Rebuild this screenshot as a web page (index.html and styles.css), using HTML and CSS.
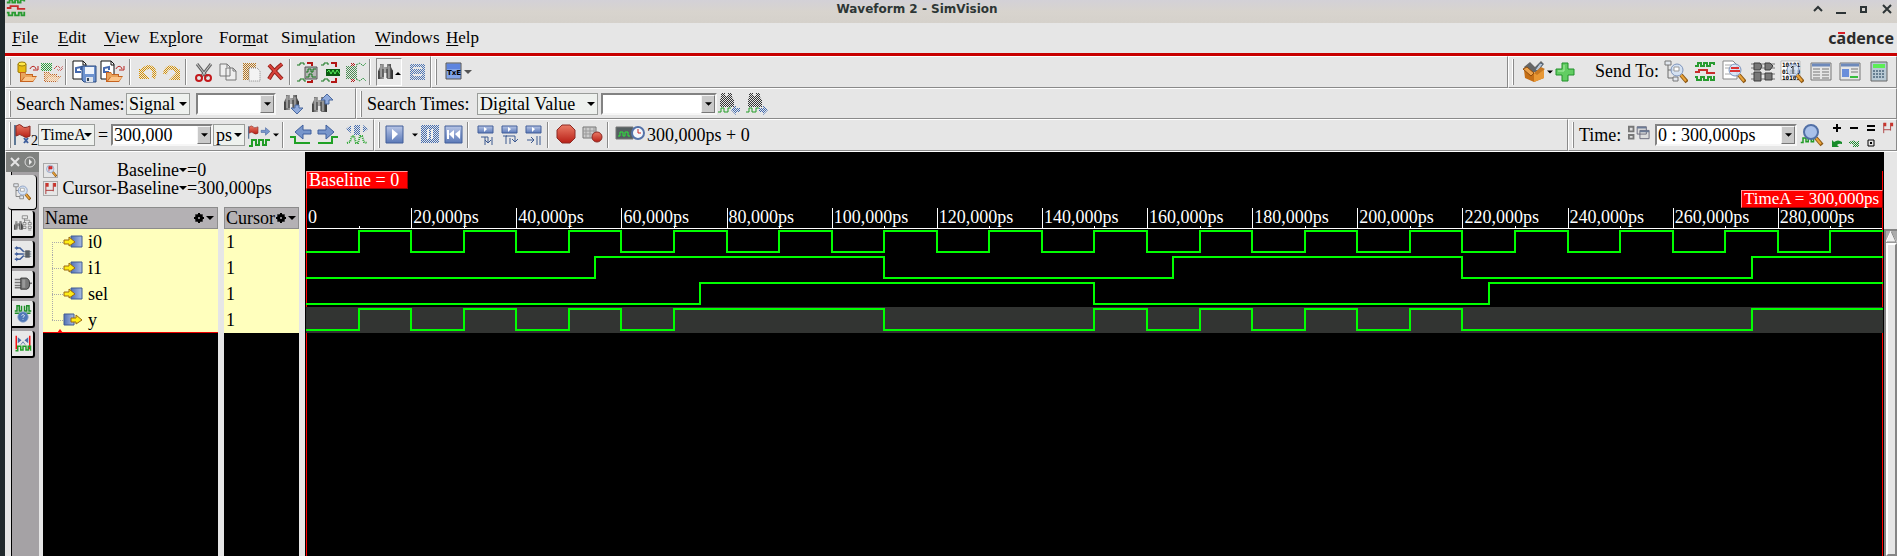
FILE: index.html
```html
<!DOCTYPE html>
<html lang="en">
<head>
<meta charset="utf-8">
<title>Waveform 2 - SimVision</title>
<link rel="stylesheet" href="styles.css">
</head>
<body>
<svg class="defs" aria-hidden="true">
  <defs>
    <pattern id="dots" width="2" height="2" patternUnits="userSpaceOnUse"><path fill="#fff" d="M0 0h1v1H0zM1 1h1v1H1z" shape-rendering="crispEdges"/></pattern>
    <mask id="dither" maskUnits="userSpaceOnUse" x="0" y="0" width="30" height="30"><rect width="30" height="30" fill="url(#dots)"/></mask>
    <linearGradient id="blue" x2="0" y2="1"><stop stop-color="#b8c6e6"/><stop offset="1" stop-color="#5b79b8"/></linearGradient>
    <linearGradient id="port"><stop stop-color="#5272b4"/><stop offset="1" stop-color="#a9bce2"/></linearGradient>
    <linearGradient id="red" x2="0" y2="1"><stop stop-color="#ea7b66"/><stop offset="1" stop-color="#b81f16"/></linearGradient>
    <linearGradient id="metal"><stop stop-color="#555"/><stop offset=".45" stop-color="#aaa"/><stop offset="1" stop-color="#333"/></linearGradient>
  </defs>
  <symbol id="folder" viewBox="0 0 24 24"><path d="M4 12h5l1 2h7v2h4l-4 6H4z" fill="#c56320"/><path d="M5 13h4l1 2h6v2H8l-3 4z" fill="#e9a45c"/><path d="M9 17h11l-3 4H6z" fill="#fbc58a"/><path d="M14 9c1-3 5-4 6 0m2-3v4h-5" fill="none" stroke="#b7201d"/></symbol>
  <symbol id="doc" viewBox="0 0 24 24"><path d="M1 1h10l3 3v15H1z" fill="#fff" stroke="#111"/><path d="M11 1v4h3" fill="none" stroke="#111"/><path d="M4 12V8l5-1v3M3 12h6" fill="none" stroke="#4468ad" stroke-width="2"/></symbol>
  <symbol id="binoc" viewBox="0 0 24 24"><path d="M5 3h4v3h3V3h4v3l2 4v8h-6v-6H9v6H3v-8l2-4z" fill="url(#metal)"/><path d="M6 4v12M14 5v12" stroke="#bbb"/><path d="M4 10v8M8 8v8M12 8v9M17 9v8" stroke="#333"/></symbol>
  <symbol id="waves" viewBox="0 0 24 24"><path d="M2 6h3V3h3v3h3V3h3v3h3V3h4v2" fill="none" stroke="#289b30" stroke-width="2"/><path d="M2 12h4v-2h8v3h8" fill="none" stroke="#c82c2c" stroke-width="2"/><path d="M2 17h2v3h4v-3h3v3h4v-3h3v3h3v-4" fill="none" stroke="#289b30" stroke-width="2"/></symbol>
  <symbol id="mag" viewBox="0 0 24 24"><path d="M17 15l6 7" stroke="#8c5713" stroke-width="4"/><path d="M17 15l5 6" stroke="#eaa43b" stroke-width="2"/><circle cx="13" cy="10" r="6" fill="#cfe0f5" fill-opacity=".8" stroke="#7d93bb" stroke-width="1"/></symbol>
  <symbol id="flag" viewBox="0 0 24 24"><path d="M1 2v20" stroke="#5d7896" stroke-width="2"/><path d="M2 3q4-3 6 0t8 0v10q-4 3-7 0t-7 0z" fill="url(#red)" stroke="#8c2a24"/></symbol>
  <symbol id="tree" viewBox="0 0 24 24"><path d="M4 5v13h6M4 10h6" fill="none" stroke="#6c6c6c"/><path d="M1 1h6v4H1zM9 17h5v4H9z" fill="#e3e8ef" stroke="#777"/></symbol>
  <symbol id="wavelet" viewBox="0 0 24 24"><path d="M1 22h3v-6h4v5h3v-5h4v5h3v-5h4" fill="none" stroke="#229c27" stroke-width="2"/></symbol>
  <symbol id="arrowR" viewBox="0 0 24 24"><path d="M4 8h8V3l8 7-8 7v-5H4z" fill="#7896cb" stroke="#3f5f9d"/></symbol>
  <symbol id="play" viewBox="0 0 24 24"><path d="M3 3h17v17H3z" fill="url(#blue)" stroke="#435f99"/></symbol>
  <symbol id="caret" viewBox="0 0 8 6"><path d="M0 1h8L4 5z"/></symbol>
  <symbol id="gear" viewBox="0 0 12 12"><path d="M5 1h2v10H5zM1 5h10v2H1zM2 3l1-1 7 7-1 1zM9 2l1 1-7 7-1-1z"/><circle cx="6" cy="6" r="4"/><circle cx="6" cy="6" r="1" fill="#b4b1b4"/></symbol>
  <symbol id="cursors" viewBox="0 0 14 14"><path d="M2 1v12M10 1v9M2 9h8" fill="none" stroke="#a33"/><path d="M2 1h3v4H2zM10 1h3v4h-3z" fill="#c9352c"/></symbol>
  <symbol id="portIn" viewBox="0 0 20 14"><path d="M8 1h11v11H8z" fill="url(#port)" stroke="#405a94"/><path d="M1 5h5V2l6 5-6 4V9H1z" fill="#ffed16" stroke="#9b6813"/></symbol>
  <symbol id="portOut" viewBox="0 0 20 14"><path d="M1 1h10v11H1z" fill="url(#port)" stroke="#405a94"/><path d="M8 5h5V2l6 5-6 4V9H8z" fill="#ffed16" stroke="#9b6813"/></symbol>
</svg>

<div class="window">
  <header class="titlebar">
    <svg class="app-icon" viewBox="0 0 24 24"><use href="#waves"/></svg>
    <h1 class="title">Waveform 2 - SimVision</h1>
    <div class="win-controls">
      <button aria-label="Shade"><svg viewBox="0 0 12 12"><path d="M2 8l4-4 4 4" fill="none" stroke="#2d3436" stroke-width="2"/></svg></button>
      <button aria-label="Minimize"><svg viewBox="0 0 12 12"><path d="M1 10h10" stroke="#2d3436" stroke-width="2"/></svg></button>
      <button aria-label="Maximize"><svg viewBox="0 0 12 12"><path d="M3 4h5v5H3z" fill="none" stroke="#2d3436" stroke-width="2"/></svg></button>
      <button aria-label="Close"><svg viewBox="0 0 12 12"><path d="M2 2l8 8M10 2l-8 8" stroke="#2d3436" stroke-width="2"/></svg></button>
    </div>
  </header>

  <nav class="menubar">
    <button><u>F</u>ile</button><button><u>E</u>dit</button><button><u>V</u>iew</button><button>Ex<u>p</u>lore</button><button>For<u>m</u>at</button><button>Sim<u>u</u>lation</button><button><u>W</u>indows</button><button><u>H</u>elp</button>
    <span class="brand">c<span class="macron">a</span>dence</span>
  </nav>

  <div class="toolrow">
    <div class="bar">
      <span class="grip"></span>
      <button class="tool" aria-label="Open database"><svg viewBox="0 0 24 24"><path d="M2 4h8v8q-4 3-8 0z" fill="#e8bd10" stroke="#a07a08"/><ellipse cx="6" cy="4" rx="4" ry="2" fill="#ffe84a" stroke="#9a7b07"/><use href="#folder"/></svg></button>
      <button class="tool" aria-label="Reload" disabled><svg viewBox="0 0 24 24"><g mask="url(#dither)"><use href="#folder"/><path d="M1 3h11v8H1z" fill="#2b9e3d"/></g></svg></button>
      <span class="sep"></span>
      <button class="tool wide" aria-label="Save"><svg viewBox="0 0 28 24"><use href="#doc" width="24" height="24"/><path d="M10 6h14v16H12l-2-2z" fill="#6e93cf" stroke="#2b4a80"/><path d="M13 7h9v7h-9z" fill="#eef3fb"/><path d="M14 17h7v5h-7z" fill="#dde3ec"/><path d="M15 18h2v3h-2z" fill="#345"/></svg></button>
      <button class="tool wide" aria-label="Open file"><svg viewBox="0 0 28 24"><use href="#doc" width="24" height="24"/><use href="#folder" x="2" width="24" height="24"/></svg></button>
      <span class="sep"></span>
      <button class="tool" aria-label="Undo" disabled><svg viewBox="0 0 24 24"><path d="M5 12q7-8 12-3 3 4 0 9" fill="none" stroke="#d79100" stroke-width="4" mask="url(#dither)"/><path d="M3 8v11h11z" fill="#d79100" mask="url(#dither)"/></svg></button>
      <button class="tool" aria-label="Redo" disabled><svg viewBox="0 0 24 24"><path d="M5 14q1-8 8-6 4 1 5 6" fill="none" stroke="#d79100" stroke-width="4" mask="url(#dither)"/><path d="M20 9v11H9z" fill="#d79100" mask="url(#dither)"/></svg></button>
      <span class="sep"></span>
      <button class="tool" aria-label="Cut"><svg viewBox="0 0 24 24"><path d="M5 4l10 13M19 4L9 17" stroke="#666" stroke-width="3"/><path d="M5 4l10 13M19 4L9 17" stroke="#ccc"/><circle cx="7" cy="18" r="3" fill="none" stroke="#c3191c" stroke-width="2"/><circle cx="16" cy="18" r="3" fill="none" stroke="#c3191c" stroke-width="2"/></svg></button>
      <button class="tool" aria-label="Copy"><svg viewBox="0 0 24 24"><path d="M4 4h7l3 3v9H4zM10 8h7l3 3v9H10z" fill="#eee" stroke="#777"/><path d="M17 8v3h3M11 4v3" fill="none" stroke="#777"/></svg></button>
      <button class="tool" aria-label="Paste" disabled><svg viewBox="0 0 24 24"><path d="M3 3h13v17H3z" fill="#b9761b" mask="url(#dither)"/><path d="M9 8h8l3 3v10H9z" fill="#f3f3f3" stroke="#888" stroke-dasharray="1 1"/></svg></button>
      <button class="tool" aria-label="Delete"><svg viewBox="0 0 24 24"><path d="M5 5l13 14M18 4Q10 10 5 19" stroke="#8e2019" stroke-width="4" fill="none"/><path d="M5 5l13 14M18 4Q10 10 5 19" stroke="#d9423a" stroke-width="2" fill="none"/></svg></button>
      <span class="sep"></span>
      <button class="tool" aria-label="Group"><svg viewBox="0 0 24 24"><path d="M9 7h12v12H9z" fill="#b5b5b5" stroke="#555"/><path d="M1 5h3V3h4v2M1 21h3v-2h4v2h2M10 12h2v-3h3v3h2v-3h3M10 17h3v-3h3v3h4" fill="none" stroke="#14771c"/><path d="M11 3h5v3M11 22h5v-2" fill="none" stroke="#b31614" stroke-width="2"/></svg></button>
      <button class="tool" aria-label="Bus"><svg viewBox="0 0 24 24"><path d="M6 9h14v7H6z" fill="#0b5b12"/><path d="M7 12l2-2 2 4 2-4 2 4 2-4 3 4" fill="none" stroke="#57f05c"/><path d="M1 5h3V3h4v2M1 21h3v-2h4v2h2" fill="none" stroke="#14771c"/><path d="M11 3h5v4M11 22h5v-4" fill="none" stroke="#b31614" stroke-width="2"/></svg></button>
      <button class="tool" aria-label="Expand" disabled><svg viewBox="0 0 24 24"><path d="M7 3h4v3H7zM7 19h4v3H7z" fill="#b31614" mask="url(#dither)"/><path d="M2 6h11v13H2z" fill="#4b8b52" mask="url(#dither)"/><path d="M12 5l4-2 3 3 3-3M12 19l4 2 3-3 3 3" fill="none" stroke="#249238" stroke-dasharray="2 1"/></svg></button>
      <span class="sep"></span>
      <button class="tool pressed" aria-label="Search"><svg viewBox="0 0 24 24"><use href="#binoc" x="-2" y="1"/><path d="M18 15h6l-3-3z"/></svg></button>
      <button class="tool big" aria-label="Grid" disabled><svg viewBox="0 0 24 24"><path d="M5 4h15v16H5z" fill="#4f77b5" mask="url(#dither)"/><path d="M8 8h9M8 15h9" stroke="#e6e6e6" stroke-width="2"/></svg></button>
    </div>
    <div class="bar grow">
      <span class="grip"></span>
      <button class="tool" aria-label="Text editor"><svg viewBox="0 0 24 24"><path d="M4 3h15v16H4z" fill="#82a4e8" stroke="#555"/><path d="M5 4h13v5H5z" fill="#5d84df"/><text x="5" y="15" class="tiny">TxE</text></svg></button>
      <svg class="caret grey" viewBox="0 0 8 6"><use href="#caret"/></svg>
    </div>
    <div class="bar send">
      <span class="grip"></span>
      <button class="tool toolbox" aria-label="Toolbox"><svg viewBox="0 0 24 24"><path d="M2 7l6-5 5 5 6-6 3 3-8 8H5z" fill="#666"/><path d="M13 10l5-7 3 1-5 7z" fill="#b9c5d5" stroke="#567"/><path d="M2 10l10 3 10-4v9l-10 4-9-4z" fill="#c56e15"/><path d="M12 13l10-4v9l-10 4z" fill="#e89835"/><path d="M1 9l4-2 7 6-3 3z" fill="#eda24a" stroke="#8d4c0d"/><path d="M12 13l7-6 4 2-8 6z" fill="#c77821"/></svg></button>
      <svg class="caret slim" viewBox="0 0 8 6"><use href="#caret"/></svg>
      <button class="tool big" aria-label="Add"><svg viewBox="0 0 24 24"><path d="M9 3h6v6h6v6h-6v6H9v-6H3V9h6z" fill="#62cd62" stroke="#21902a"/><path d="M11 5v6H5" fill="none" stroke="#a9eda5"/></svg></button>
      <span class="label send-label">Send To:</span>
      <button class="tool send-to" aria-label="Design browser"><svg viewBox="0 0 24 24"><use href="#tree"/><use href="#mag"/><path d="M10 7h5v4h-5z" fill="#fff" stroke="#999"/></svg></button>
      <button class="tool send-to" aria-label="Waveform"><svg viewBox="0 0 24 24"><use href="#waves"/></svg></button>
      <button class="tool send-to" aria-label="Source browser"><svg viewBox="0 0 24 24"><path d="M1 1h10l4 4v14H1z" fill="#fff" stroke="#888"/><path d="M3 5h7M3 8h7M3 14h8" stroke="#aaa"/><use href="#mag"/><path d="M9 8h8M8 11h10" stroke="#dc3333" stroke-width="2"/></svg></button>
      <button class="tool send-to" aria-label="Schematic"><svg viewBox="0 0 24 24"><path d="M0 4h24M0 8h24M0 14h24M0 19h24" stroke="#777"/><path d="M3 3h6l2 3-2 4H3zM14 3h5l3 3-3 4h-5zM3 12h7v9H3zM14 13h7v7h-7z" fill="#777" stroke="#3c3c3c"/></svg></button>
      <button class="tool send-to" aria-label="Memory viewer"><svg viewBox="0 0 24 24"><path d="M1 1h19v19H1z" fill="#fff" stroke="#bbb"/><text x="2" y="7" class="bits">10101</text><text x="2" y="14" class="bits">01010</text><text x="2" y="20" class="bits">10101</text><use href="#mag"/><path d="M11 8l2-2v8" fill="none" stroke="#222"/></svg></button>
      <button class="tool send-to" aria-label="Register"><svg viewBox="0 0 24 24"><path d="M2 3h20v17H2z" fill="#e6e6e6" stroke="#777"/><path d="M3 5h18" stroke="#6d89bb" stroke-width="3"/><path d="M4 9h7M13 9h7M4 12h7M13 12h7M4 15h7M13 15h7M4 18h7M13 18h7" stroke="#777"/></svg></button>
      <button class="tool send-to" aria-label="Properties"><svg viewBox="0 0 24 24"><path d="M2 3h20v17H2z" fill="#e6e6e6" stroke="#777"/><path d="M3 5h18" stroke="#6d89bb" stroke-width="3"/><path d="M4 9h7v8H4z" fill="#6a8edb"/><path d="M13 9h7M13 12h7" stroke="#777"/><path d="M12 17h8" stroke="#35bd3c" stroke-width="2"/></svg></button>
      <button class="tool send-to" aria-label="Calculator"><svg viewBox="0 0 24 24"><path d="M4 2h16v19H4z" fill="#b8c9d4" stroke="#666"/><path d="M6 4h12v4H6z" fill="#5bee54"/><path d="M6 11h12M6 14h12M6 17h12" stroke="#667f91" stroke-width="2" stroke-dasharray="2 1"/></svg></button>
    </div>
  </div>

  <div class="toolrow">
    <div class="bar names">
      <span class="grip"></span>
      <label class="label w110" for="names-kind">Search Names:</label>
      <span class="option"><select id="names-kind" class="w62"><option>Signal</option></select><svg class="caret" viewBox="0 0 8 6"><use href="#caret"/></svg></span>
      <span class="combo gap-l"><input class="w62" type="text" aria-label="Name to search"><button aria-label="Show names"><svg viewBox="0 0 8 6"><use href="#caret"/></svg></button></span>
      <button class="tool big gap-l" aria-label="Search down"><svg viewBox="0 0 24 24"><use href="#binoc" x="-1"/><path d="M13 13h4v3h4l-6 6-6-6h4z" fill="#8faadc" stroke="#4b699e"/></svg></button>
      <button class="tool big" aria-label="Search up"><svg viewBox="0 0 24 24"><use href="#binoc" x="-1" y="2"/><path d="M15 12h4V8h4l-6-6-6 6h4z" fill="#8faadc" stroke="#4b699e"/></svg></button>
    </div>
    <div class="bar grow">
      <span class="grip"></span>
      <label class="label w110" for="times-kind">Search Times:</label>
      <span class="option"><select id="times-kind" class="w118"><option>Digital Value</option></select><svg class="caret" viewBox="0 0 8 6"><use href="#caret"/></svg></span>
      <span class="combo gap-s"><input class="w98" type="text" aria-label="Value to search"><button aria-label="Show values"><svg viewBox="0 0 8 6"><use href="#caret"/></svg></button></span>
      <button class="tool big" aria-label="Search back" disabled><svg viewBox="0 0 24 24"><path d="M4 1h4v3h3V1h4v4l2 3v7H3V8l1-3z" fill="#333" mask="url(#dither)"/><path d="M1 20h3v-4h3v4h4v-4h3" fill="none" stroke="#229c27"/><path d="M14 18l5-5v3h4v4h-4v3z" fill="#426bb0" mask="url(#dither)"/></svg></button>
      <button class="tool big" aria-label="Search forward" disabled><svg viewBox="0 0 24 24"><path d="M4 1h4v3h3V1h4v4l2 3v7H3V8l1-3z" fill="#333" mask="url(#dither)"/><path d="M1 20h3v-4h3v4h4v-4h3" fill="none" stroke="#229c27"/><path d="M23 18l-5-5v3h-4v4h4v3z" fill="#426bb0" mask="url(#dither)"/></svg></button>
    </div>
  </div>

  <div class="toolrow">
    <div class="bar">
      <span class="grip slim-grip"></span>
      <button class="tool" aria-label="Cursor"><svg viewBox="0 0 24 24"><use href="#flag"/><path d="M10 15l4 5m0-5l-4 5" stroke="#3f5f9d" stroke-width="2"/><text x="17" y="22" class="sub">2</text></svg></button>
      <span class="option"><select class="w54" aria-label="Cursor name"><option>TimeA</option></select><svg class="caret" viewBox="0 0 8 6"><use href="#caret"/></svg></span>
      <span class="label equals">=</span>
      <span class="combo"><input class="w84" type="text" value="300,000" aria-label="Cursor time"><button aria-label="Show times"><svg viewBox="0 0 8 6"><use href="#caret"/></svg></button></span>
      <span class="option"><select class="w30" aria-label="Unit"><option>ps</option></select><svg class="caret" viewBox="0 0 8 6"><use href="#caret"/></svg></span>
      <button class="tool gap-s" aria-label="Go to cursor"><svg viewBox="0 0 24 24"><use href="#flag" width="15" height="15" y="2"/><use href="#arrowR" x="11" y="3" width="13" height="13"/><use href="#wavelet" y="1"/></svg></button>
      <svg class="caret slim" viewBox="0 0 8 6"><use href="#caret"/></svg>
      <span class="sep"></span>
      <button class="tool big" aria-label="Previous edge"><svg viewBox="0 0 24 24"><path d="M22 7h-8V2L6 9l8 7v-5h8z" fill="#7896cb" stroke="#3f5f9d"/><path d="M1 14h5v6h15" fill="none" stroke="#20a126" stroke-width="2"/></svg></button>
      <button class="tool big" aria-label="Next edge"><svg viewBox="0 0 24 24"><use href="#arrowR" x="-3" y="-1"/><path d="M1 20h14v-6h6" fill="none" stroke="#20a126" stroke-width="2"/></svg></button>
      <button class="tool big" aria-label="Both edges" disabled><svg viewBox="0 0 24 24"><path d="M1 6l5-4v8zM23 6l-5-4v8zM9 2h6v10H9z" fill="#426bb0" mask="url(#dither)"/><path d="M2 20l3-1 2-6h2l2 7h2l2-7h2l2 6 3 1" fill="none" stroke="#20a126" stroke-width="2" stroke-dasharray="1 1"/></svg></button>
    </div>
    <div class="bar grow">
      <span class="grip slim-grip"></span>
      <button class="tool big" aria-label="Run"><svg viewBox="0 0 24 24"><use href="#play"/><path d="M9 6v11l6-6z" fill="#fff"/></svg></button>
      <svg class="caret slim" viewBox="0 0 8 6"><use href="#caret"/></svg>
      <button class="tool" aria-label="Pause" disabled><svg viewBox="0 0 24 24"><path d="M3 2h18v18H3z" fill="#426bb0" mask="url(#dither)"/><path d="M10 6v10M14 6v10" stroke="#eee" stroke-width="2"/></svg></button>
      <button class="tool" aria-label="Reset"><svg viewBox="0 0 24 24"><use href="#play"/><path d="M5 7h2v9H5zM12 7v9l-5-5zM18 7v9l-5-5z" fill="#fff"/></svg></button>
      <span class="sep"></span>
      <button class="tool" aria-label="Step"><svg viewBox="0 0 24 24"><path d="M4 3h15v7H4z" fill="url(#blue)" stroke="#435f99"/><path d="M10 4v5l3-3z" fill="#fff"/><path d="M7 14h7v6M11 17l3 3 3-3M11 14v8M18 14v8" fill="none" stroke="#3b588f"/></svg></button>
      <button class="tool" aria-label="Next"><svg viewBox="0 0 24 24"><path d="M4 3h15v7H4z" fill="url(#blue)" stroke="#435f99"/><path d="M10 4v5l3-3z" fill="#fff"/><path d="M8 21v-8h9v5M14 16l3 3 3-3M12 15v6M5 13h4" fill="none" stroke="#3b588f"/></svg></button>
      <button class="tool" aria-label="Finish"><svg viewBox="0 0 24 24"><path d="M4 3h15v7H4z" fill="url(#blue)" stroke="#435f99"/><path d="M10 4v5l3-3z" fill="#fff"/><path d="M5 17h7M9 14l3 3-3 3M15 13v9M18 13v9" fill="none" stroke="#3b588f"/></svg></button>
      <span class="sep"></span>
      <button class="tool big" aria-label="Stop"><svg viewBox="0 0 24 24"><path d="M8 2h8l5 5v8l-5 5H8l-5-5V7z" fill="url(#red)" stroke="#8c2a24"/></svg></button>
      <button class="tool" aria-label="Breakpoints"><svg viewBox="0 0 24 24"><path d="M1 4h13v11H1z" fill="#ccc" stroke="#777"/><path d="M4 4v11M8 4v11M12 4v11M1 8h13M1 11h13" stroke="#999"/><circle cx="15" cy="14" r="5" fill="url(#red)" stroke="#8c2a24"/></svg></button>
      <span class="sep"></span>
      <svg class="sim-time" viewBox="0 0 30 24"><path d="M1 4h17v12H1z" fill="#555f60" stroke="#777"/><path d="M3 13h2V9h3v4h2V9h3v4h2" fill="none" stroke="#2bea3b"/><circle cx="23" cy="10" r="6" fill="#f4f7fc" stroke="#5472a9" stroke-width="2"/><path d="M23 6v4h3" fill="none" stroke="#c22"/></svg>
      <output class="label">300,000ps + 0</output>
    </div>
    <div class="bar">
      <span class="grip"></span>
      <label class="label w48" for="range">Time:</label>
      <svg class="range-icon" viewBox="0 0 24 24"><path d="M1 3h5v5H1zM1 12h5v4H1z" fill="#ddd" stroke="#777" stroke-width="2"/><path d="M10 3h10v8H10zM13 7h10v9H13z" fill="#ddd" stroke="#667"/><path d="M10 4h10M13 8h10" stroke="#6c7b96" stroke-width="2"/></svg>
      <span class="combo gap-r"><input id="range" class="w124" type="text" value="0 : 300,000ps"><button aria-label="Show ranges"><svg viewBox="0 0 8 6"><use href="#caret"/></svg></button></span>
      <button class="tool big" aria-label="Zoom fit"><svg viewBox="0 0 24 24"><use href="#wavelet" width="18" height="24" y="0"/><path d="M16 15l6 7" stroke="#8c5713" stroke-width="4"/><path d="M16 15l5 6" stroke="#eaa43b" stroke-width="2"/><circle cx="11" cy="9" r="7" fill="#a9c1ea" stroke="#5270a6" stroke-width="2"/></svg></button>
      <div class="zooms">
        <button aria-label="Zoom in"><svg viewBox="0 0 12 12"><path d="M2 6h8M6 2v8" stroke="#000" stroke-width="2"/></svg></button>
        <button aria-label="Zoom out"><svg viewBox="0 0 12 12"><path d="M2 6h8" stroke="#000" stroke-width="2"/></svg></button>
        <button aria-label="Zoom equal"><svg viewBox="0 0 12 12"><path d="M2 4h8M2 8h8" stroke="#000" stroke-width="2"/></svg></button>
        <button aria-label="Zoom cursors"><svg viewBox="0 0 14 14"><use href="#cursors"/></svg></button>
        <button aria-label="Zoom back"><svg viewBox="0 0 12 12"><path d="M1 3l2 2q4-3 8 0v2Q8 6 6 8l2 2H1z" fill="#178b2a"/></svg></button>
        <button aria-label="Zoom forward" disabled><svg viewBox="0 0 12 12"><path d="M11 3L9 5Q5 2 1 5v2q3-1 5 1l-2 2h7z" fill="#178b2a" mask="url(#dither)"/></svg></button>
        <button aria-label="Zoom full"><svg viewBox="0 0 12 12"><path d="M3 3h6v6H3z" fill="none" stroke="#000"/><path d="M5 5h2v2H5z"/></svg></button>
      </div>
    </div>
  </div>

  <main class="main">
    <aside class="sidebar">
      <div class="side-head">
        <button aria-label="Close sidebar"><svg viewBox="0 0 12 12"><path d="M2 2l8 8M10 2l-8 8" stroke="#e4e4e4" stroke-width="2"/></svg></button>
        <button aria-label="Open sidebar"><svg viewBox="0 0 12 12"><circle cx="6" cy="6" r="5" fill="none" stroke="#ddd"/><path d="M5 3v6l3-3z" fill="#eee"/></svg></button>
      </div>
      <div class="tabs">
        <button class="tab active" aria-label="Design browser"><svg viewBox="0 0 24 24"><use href="#tree"/><use href="#mag"/><path d="M10 7h5v4h-5z" fill="#fff" stroke="#999"/></svg></button>
        <button class="tab" aria-label="Find"><svg viewBox="0 0 24 24"><path d="M11 1h7v4h-7zM12 10h4v3h-4zM12 15h4v3h-4zM19 10h4v3h-4zM19 15h4v3h-4zM14 5v5M21 10V7h-7M19 20h4" fill="#e8e8e8" stroke="#777"/><use href="#binoc" y="6" width="18" height="18" x="-2"/></svg></button>
        <button class="tab" aria-label="Trace drivers"><svg viewBox="0 0 24 24"><path d="M1 4h7l5 5M1 12h12M1 19h7l5-5" fill="none" stroke="#3e5c99" stroke-width="2"/><path d="M3 1l3 3-3 3zM3 9l3 3-3 3zM3 16l3 3-3 3z" fill="#3e5c99"/><path d="M15 7h6v10h-6z" fill="#666"/><path d="M13 9h10M13 12h10M13 15h10" stroke="#456"/></svg></button>
        <button class="tab" aria-label="Schematic"><svg viewBox="0 0 24 24"><path d="M1 6h8M1 10h8M1 14h8M1 17h8M18 11h6" stroke="#777" stroke-width="2"/><path d="M9 4h8q4 2 4 8t-4 7H9z" fill="#777" stroke="#222"/><path d="M11 6h4v11h-4z" fill="#999"/></svg></button>
        <button class="tab" aria-label="Wave query"><svg viewBox="0 0 24 24"><path d="M1 8h3V1h3v7h3V1M1 11h8M14 1v7h3V1h3v7h3M14 11h8" fill="none" stroke="#1c8e27" stroke-width="2"/><circle cx="12" cy="16" r="7" fill="#4f78b8" stroke="#93a9ce"/><path d="M10 14q2-3 4 0l-2 3m0 2v1" fill="none" stroke="#fff"/></svg></button>
        <button class="tab" aria-label="Wave compare"><svg viewBox="0 0 24 24"><path d="M3 1v18M21 1v18" stroke="#f51616" stroke-width="2"/><path d="M5 3v8l5-4zM19 3v8l-5-4z" fill="#4b6aa4"/><path d="M9 13l3-4 3 4" fill="none" stroke="#4b6aa4"/><path d="M2 21h3v-6h4v5h3v-5h4v5h3v-5h3v6" fill="none" stroke="#229c27" stroke-width="2"/></svg></button>
      </div>
    </aside>

    <section class="signals">
      <div class="baseline">
        <button class="mini" aria-label="Find baseline"><svg viewBox="3 2 21 21"><use href="#mag" width="24" height="24"/><path d="M11 6v8M11 6h5v4h-5z" stroke="#b22" fill="#d33"/></svg></button>
        <div class="base-line"><button>Baseline<svg class="caret" viewBox="0 0 8 6"><use href="#caret"/></svg></button>=0</div>
        <button class="mini" aria-label="Cursor to baseline"><svg viewBox="0 0 14 14"><use href="#cursors"/></svg></button>
        <div class="base-line"><button>Cursor-Baseline<svg class="caret" viewBox="0 0 8 6"><use href="#caret"/></svg></button>=300,000ps</div>
      </div>
      <div class="columns">
        <div class="col">
          <div class="col-head">Name<button aria-label="Name options"><svg class="gear" viewBox="0 0 12 12"><use href="#gear"/></svg><svg class="caret" viewBox="0 0 8 6"><use href="#caret"/></svg></button></div>
          <ul class="rows tree">
            <li><svg viewBox="0 0 20 14"><use href="#portIn"/></svg>i0</li>
            <li><svg viewBox="0 0 20 14"><use href="#portIn"/></svg>i1</li>
            <li><svg viewBox="0 0 20 14"><use href="#portIn"/></svg>sel</li>
            <li><svg viewBox="0 0 20 14"><use href="#portOut"/></svg>y</li>
          </ul>
          <div class="insert"></div>
        </div>
        <div class="col">
          <div class="col-head">Cursor<button aria-label="Cursor options"><svg class="gear" viewBox="0 0 12 12"><use href="#gear"/></svg><svg class="caret" viewBox="0 0 8 6"><use href="#caret"/></svg></button></div>
          <ul class="rows"><li>1</li><li>1</li><li>1</li><li>1</li></ul>
        </div>
      </div>
    </section>

    <section class="waves">
      <div class="flags">
        <span class="marker">Baseline = 0</span>
        <span class="marker right">TimeA = 300,000ps</span>
      </div>
      <div class="ruler">
        <span>0</span><span>20,000ps</span><span>40,000ps</span><span>60,000ps</span><span>80,000ps</span><span>100,000ps</span><span>120,000ps</span><span>140,000ps</span><span>160,000ps</span><span>180,000ps</span><span>200,000ps</span><span>220,000ps</span><span>240,000ps</span><span>260,000ps</span><span>280,000ps</span>
      </div>
      <svg class="trace" viewBox="0 0 300 26" preserveAspectRatio="none"><path d="M0 23H10V2H20V23H30V2H40V23H50V2H60V23H70V2H80V23H90V2H100V23H110V2H120V23H130V2H140V23H150V2H160V23H170V2H180V23H190V2H200V23H210V2H220V23H230V2H240V23H250V2H260V23H270V2H280V23H290V2H300"/></svg>
      <svg class="trace" viewBox="0 0 300 26" preserveAspectRatio="none"><path d="M0 23H55V2H110V23H165V2H220V23H275V2H300"/></svg>
      <svg class="trace" viewBox="0 0 300 26" preserveAspectRatio="none"><path d="M0 23H75V2H150V23H225V2H300"/></svg>
      <svg class="trace selected" viewBox="0 0 300 26" preserveAspectRatio="none"><path d="M0 23H10V2H20V23H30V2H40V23H50V2H60V23H70V2H110V23H150V2H160V23H170V2H180V23H190V2H200V23H210V2H220V23H275V2H300"/></svg>
    </section>

    <div class="scroll">
      <div class="track"><button aria-label="Scroll up"><svg viewBox="0 0 11 12"><path d="M0 11L5 0l6 11z" fill="#eee"/><path d="M5 0l5 11H0" fill="none" stroke="#888"/><path d="M5 0L0 11" stroke="#fff"/></svg></button><div class="thumb"></div></div>
    </div>
  </main>
</div>
</body>
</html>
```
FILE: styles.css
```css
* { box-sizing: border-box; }

body {
  margin: 0;
  height: 100vh;
  overflow: hidden;
  display: flex;
  background: #20292c;
  color: #000;
  font: 18px/20px "Liberation Serif", serif;
}

button, select, input {
  margin: 0;
  padding: 0;
  border: 0;
  border-radius: 0;
  background: none;
  color: inherit;
  font: inherit;
}

svg { display: block; flex: none; }
.defs { position: absolute; width: 0; height: 0; }

.window {
  flex: 1;
  min-width: 0;
  margin-left: 5px;
  display: flex;
  flex-direction: column;
  background: #e6e6e6;
}

/* Title bar */
.titlebar {
  height: 23px;
  display: grid;
  grid-template-columns: 1fr auto 1fr;
  align-items: start;
  overflow: hidden;
  background: linear-gradient(#d3d1d7, #d8d4ce 50%, #d5d1cb);
}
.app-icon { width: 22px; height: 22px; margin-top: -3px; }
.title {
  margin: 0;
  padding-right: 68px;
  color: #2d3635;
  font: bold 12px/19px "DejaVu Sans", sans-serif;
}
.win-controls {
  display: flex;
  justify-content: flex-end;
  gap: 11px;
  padding: 3px 4px 0 0;
}
.win-controls svg { width: 12px; height: 12px; }

/* Menu bar */
.menubar {
  height: 33px;
  display: grid;
  grid-template-columns: 46px 46px 45px 70px 62px 94px 71px 50px 1fr;
  align-items: center;
  padding: 0 3px 0 7px;
  border-bottom: 3px solid #c80000;
  font-size: 17px;
}
.menubar button { text-align: left; }
.menubar u { text-underline-offset: 2px; text-decoration-thickness: 1px; }
.brand {
  justify-self: end;
  color: #2b2b2b;
  font: bold 16px/20px "Noto Sans", sans-serif;
}
.macron { position: relative; }
.macron::after {
  content: "";
  position: absolute;
  left: 1px;
  top: 5px;
  width: 7px;
  height: 2px;
  background: #d81e28;
}

/* Toolbars */
.toolrow { display: flex; height: 32px; }
.toolrow:nth-of-type(2) { height: 31px; }
.bar {
  display: flex;
  align-items: center;
  border: 1px solid;
  border-color: #fff #8a8a8a #8a8a8a #fff;
}
.grow { flex: 1; }
.grip {
  width: 2px;
  height: 26px;
  margin: 0 5px 0 3px;
  border-left: 1px solid #fff;
  border-right: 1px solid #8a8a8a;
}
.slim-grip { margin-right: 3px; }
.sep {
  width: 2px;
  height: 26px;
  margin: 0 5px 0 1px;
  border-left: 1px solid #8a8a8a;
  border-right: 1px solid #fff;
}
.tool { width: 24px; height: 24px; }
.tool svg { width: 24px; height: 24px; }
.tool.wide, .tool.wide svg { width: 28px; }
.tool.big { width: 28px; }
.tool.send-to { width: 29px; }
.tool.toolbox { margin-left: 3px; }
.tool.pressed {
  width: 26px;
  height: 28px;
  border: 1px solid;
  border-color: #8a8a8a #fff #fff #8a8a8a;
  background: #ebebeb;
}
.tool.pressed + .big { padding-left: 3px; }
.send-label { width: 64px; margin: 0 5px 2px 14px; }
.caret { width: 8px; height: 6px; }
.caret.grey { fill: #555; margin-left: -2px; }
.caret.slim { width: 6px; margin-left: 1px; }
.slim + .sep { margin-left: 3px; }
.label { white-space: pre; }
.w110 { width: 110px; }
.w48 { width: 48px; }
.equals { width: 16px; text-align: center; }
.gap-l { margin-left: 6px; }
.gap-s { margin-left: 3px; }
.gap-r { margin-right: 3px; }
.names { width: 351px; }

.option {
  display: flex;
  align-items: center;
  height: 22px;
  padding-right: 2px;
  border: 1px solid #9a9d9a;
  background: #eef1ee;
}
.option select {
  appearance: none;
  height: 20px;
  padding-left: 2px;
}
.option .caret { margin-left: -8px; pointer-events: none; }
.option .w62 { width: 60px; }
.option .w118 { width: 117px; }
.option .w54 { width: 53px; font-size: 16px; }
.option .w30 { width: 28px; }

.combo {
  display: flex;
  height: 22px;
  border: 2px solid;
  border-color: #828282 #f6f6f6 #f6f6f6 #828282;
  background: #fff;
}
.combo input { height: 18px; padding-left: 1px; outline: 0; }
.combo .w62 { width: 62px; }
.combo .w98 { width: 98px; }
.combo .w84 { width: 84px; }
.combo .w124 { width: 124px; }
.combo button {
  width: 14px;
  height: 18px;
  display: grid;
  place-items: center;
  border: 1px solid;
  border-color: #f4f4f4 #777 #777 #f4f4f4;
  background: #c9c9c9;
}
.combo button svg { width: 7px; height: 6px; }

.tiny { font: bold 7px/8px "DejaVu Sans", sans-serif; }
.bits { font: bold 6px/7px "DejaVu Sans Mono", monospace; }
.sub { font: 14px/14px "Liberation Serif", serif; }
.sim-time { width: 30px; height: 24px; margin: 0 2px 0 1px; }
.range-icon { width: 24px; height: 22px; margin-right: 4px; }
.zooms {
  display: grid;
  grid-template-columns: repeat(4, 17px);
  gap: 3px 0;
}
.zooms button { display: grid; place-items: center; height: 12px; }
.zooms svg { width: 12px; height: 12px; }

/* Work area */
.main {
  flex: 1;
  min-height: 0;
  display: flex;
  border-top: 1px solid #fff;
}
.sidebar { width: 34px; display: flex; flex-direction: column; padding-left: 1px; }
.side-head {
  height: 20px;
  display: flex;
  align-items: center;
  justify-content: center;
  gap: 3px;
  background: #808280;
}
.side-head svg { width: 12px; height: 12px; }
.tabs {
  flex: 1;
  display: flex;
  flex-direction: column;
  align-items: flex-start;
  gap: 3px;
  margin-left: 5px;
  padding-top: 3px;
  border-left: 1px solid #000;
  background: #a5a2a5;
}
.tab {
  width: 23px;
  height: 27px;
  display: grid;
  place-items: center;
  border: solid #000;
  border-width: 0 2px 2px 0;
  border-radius: 0 3px 3px 0;
  background: #e8e8e8;
}
.tab svg { width: 18px; height: 18px; }
.tab.active {
  width: 29px;
  height: 35px;
  margin: 0 0 -2px -4px;
  border-width: 0 1px 1px 0;
  border-radius: 4px;
}

.signals { width: 266px; display: flex; flex-direction: column; padding: 0 6px 0 4px; }
.baseline {
  height: 55px;
  display: grid;
  grid-template-columns: 16px 1fr;
  grid-auto-rows: 18px;
  padding-top: 9px;
}
.mini { width: 15px; height: 15px; border: 1px solid #aaa; align-self: center; }
.mini svg { width: 13px; height: 13px; }
.base-line { display: flex; align-items: center; height: 18px; }
.base-line button { display: flex; align-items: center; justify-content: flex-end; width: 128px; }
.columns { flex: 1; display: grid; grid-template-columns: 1fr 75px; gap: 6px; }
.col { background: #000; }
.col-head {
  height: 22px;
  display: flex;
  align-items: center;
  justify-content: space-between;
  padding: 0 3px 0 1px;
  border: 1px solid #8c8c8c;
  background: #b4b1b4;
}
.col-head button { display: flex; align-items: center; gap: 1px; }
.gear { width: 12px; height: 12px; }
.rows {
  margin: 0;
  padding: 0;
  list-style: none;
  background: #ffffbd;
}
.rows li { height: 26px; padding-left: 2px; line-height: 26px; }
.tree li {
  display: flex;
  align-items: center;
  gap: 5px;
  padding-left: 9px;
  background: repeating-linear-gradient(#aaa 0 1px, transparent 1px 2px) 9px 0 / 1px 26px no-repeat;
}
.tree li::before { content: ""; width: 11px; margin-right: -5px; border-top: 1px dotted #aaa; }
.tree li:first-child { background-position: 9px 13px; }
.tree li:last-child { background-size: 1px 14px; }
.tree svg { width: 20px; height: 14px; }
.insert { position: relative; height: 1px; margin-top: -1px; background: #e00; }
.insert::before {
  content: "";
  position: absolute;
  left: 14px;
  bottom: 0;
  border: 3px solid transparent;
  border-top: 0;
  border-bottom: 4px solid #f00;
}

.waves {
  position: relative;
  flex: 1;
  min-width: 0;
  padding-left: 1px;
  background: #000;
  color: #fff;
  border-right: 1px solid #000;
}
.waves::before {
  content: "";
  position: absolute;
  inset: 19px 0 0 1px;
  border: solid #f00;
  border-width: 0 1px;
}
.flags { height: 56px; display: flex; justify-content: space-between; padding-top: 19px; }
.marker {
  position: relative;
  height: 18px;
  padding: 0 3px 0 2px;
  line-height: 16px;
  border: 1px solid;
  border-color: #ff9a9a #900 #900 #ff9a9a;
  background: #f00;
  min-width: 102px;
}
.marker.right { margin-top: 19px; font-size: 17px; }
.ruler {
  display: grid;
  grid-template-columns: repeat(15, 1fr);
  height: 21px;
  border-bottom: 1px solid #fff;
}
.ruler span {
  height: 20px;
  padding-left: 1px;
  border-left: 1px solid #fff;
  line-height: 18px;
  background: linear-gradient(#fff, #fff) 50% 100% / 1px 2px no-repeat;
}
.ruler span:first-child { border-color: transparent; }
.trace { position: relative; width: 100%; height: 26px; }
.trace path {
  fill: none;
  stroke: #0f0;
  stroke-width: 2px;
  vector-effect: non-scaling-stroke;
  shape-rendering: crispEdges;
}
.selected { background: #323432; }

.scroll { width: 13px; padding-top: 77px; display: flex; }
.track {
  flex: 1;
  display: flex;
  flex-direction: column;
  border: solid #858585;
  border-width: 2px 0 0 2px;
  background: #aaa;
}
.track button { height: 12px; }
.track svg { width: 11px; height: 12px; }
.thumb {
  flex: 1;
  border: 2px solid;
  border-color: #fff #858585 #858585 #fff;
  background: #e6e6e6;
}
```
